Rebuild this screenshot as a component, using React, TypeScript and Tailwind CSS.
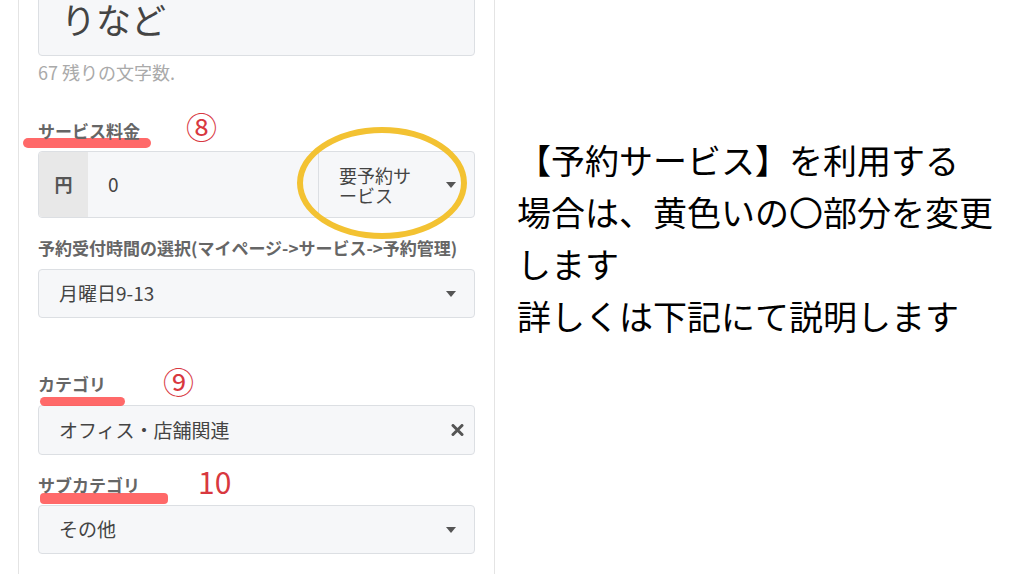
import React from 'react';

const jp = { fontFamily: '"Noto Sans CJK JP", "Noto Sans", sans-serif' };

function Caret() {
  return (
    <svg width="10" height="6" viewBox="0 0 10 6" className="shrink-0">
      <path d="M0 0 L10 0 L5 6 Z" fill="#555" />
    </svg>
  );
}

function Label({ children }: { children: React.ReactNode }) {
  return <div className="text-[17px] leading-[20px] font-bold text-[#666] whitespace-nowrap">{children}</div>;
}

export default function App() {
  return (
    <div className="w-[1030px] h-[574px] overflow-hidden bg-white flex" style={jp}>
      {/* form card */}
      <div className="ml-[18px] w-[477px] shrink-0 border-x border-[#e4e4e4] px-[19px] flex flex-col">
        <div className="-mt-[30px] h-[86px] rounded border border-[#dcdfe3] bg-[#f6f7f9] pl-[22px] pt-[26px] text-[35px] leading-[44px] text-[#444]">
          りなど
        </div>
        <div className="mt-[6px] text-[18px] leading-[20px] text-[#aaa]">67 残りの文字数.</div>

        {/* service fee */}
        <div className="relative mt-[39px]">
          <div className="absolute -left-[15px] top-[17px] w-[128px] h-[10px] rounded-full bg-[#ff4f4f]/85" />
          <div className="relative">
            <Label>サービス料金</Label>
          </div>
          <div className="absolute left-[148px] -top-[10px] text-[31px] leading-[30px] text-[#d8383f]">⑧</div>
        </div>
        <div className="relative mt-[10px] h-[67px] flex rounded border border-[#dcdfe3] bg-[#f6f7f9]">
          <div className="w-[49px] flex items-center justify-center bg-[#e8e8e8] text-[18px] font-bold text-[#555] rounded-l">円</div>
          <div className="flex-1 flex items-center pl-[20px] text-[19px] text-[#444]">0</div>
          <div className="w-[156px] border-l border-[#dcdfe3] flex items-center pl-[20px] pr-[18px]">
            <div className="flex-1 text-[18px] leading-[20px] text-[#444]">
              要予約サ
              <br />
              ービス
            </div>
            <Caret />
          </div>
          <div className="absolute left-[258px] -top-[25px] w-[170px] h-[112px] rounded-[50%] border-[6px] border-[#f3c232]" />
        </div>

        {/* reservation time */}
        <div className="mt-[20px]">
          <Label>予約受付時間の選択(マイページ-&gt;サービス-&gt;予約管理)</Label>
        </div>
        <div className="mt-[11px] h-[49px] flex items-center rounded border border-[#dcdfe3] bg-[#f6f7f9] pl-[20px] pr-[18px]">
          <div className="flex-1 text-[19px] text-[#444]">月曜日9-13</div>
          <Caret />
        </div>

        {/* category */}
        <div className="relative mt-[56px]">
          <div className="absolute left-[2px] top-[23px] w-[85px] h-[9px] rounded-full bg-[#ff4f4f]/85" />
          <div className="relative">
            <Label>カテゴリ</Label>
          </div>
          <div className="absolute left-[125px] -top-[8px] text-[31px] leading-[30px] text-[#d8383f]">⑨</div>
        </div>
        <div className="mt-[11px] h-[50px] flex items-center rounded border border-[#dcdfe3] bg-[#f6f7f9] pl-[20px] pr-[10px]">
          <div className="flex-1 text-[19px] text-[#444]">オフィス・店舗関連</div>
          <svg width="13" height="12" viewBox="0 0 13 12">
            <path d="M2 1.5 L11 10.5 M11 1.5 L2 10.5" stroke="#555" strokeWidth="3" strokeLinecap="round" />
          </svg>
        </div>

        {/* sub category */}
        <div className="relative mt-[20px]">
          <div className="absolute left-[2px] top-[18px] w-[128px] h-[11px] rounded-sm bg-[#ff4f4f]/85" />
          <div className="relative">
            <Label>サブカテゴリ</Label>
          </div>
          <div className="absolute left-[160px] -top-[9px] text-[30px] leading-[30px] text-[#d8383f]">10</div>
        </div>
        <div className="mt-[10px] h-[49px] flex items-center rounded border border-[#dcdfe3] bg-[#f6f7f9] pl-[20px] pr-[18px]">
          <div className="flex-1 text-[19px] text-[#444]">その他</div>
          <Caret />
        </div>
      </div>

      {/* explanation */}
      <div className="ml-[22px] pt-[134px] text-[34px] leading-[52px] text-black whitespace-nowrap">
        <div>【予約サービス】を利用する</div>
        <div>場合は、黄色いの〇部分を変更</div>
        <div>します</div>
        <div>詳しくは下記にて説明します</div>
      </div>
    </div>
  );
}
